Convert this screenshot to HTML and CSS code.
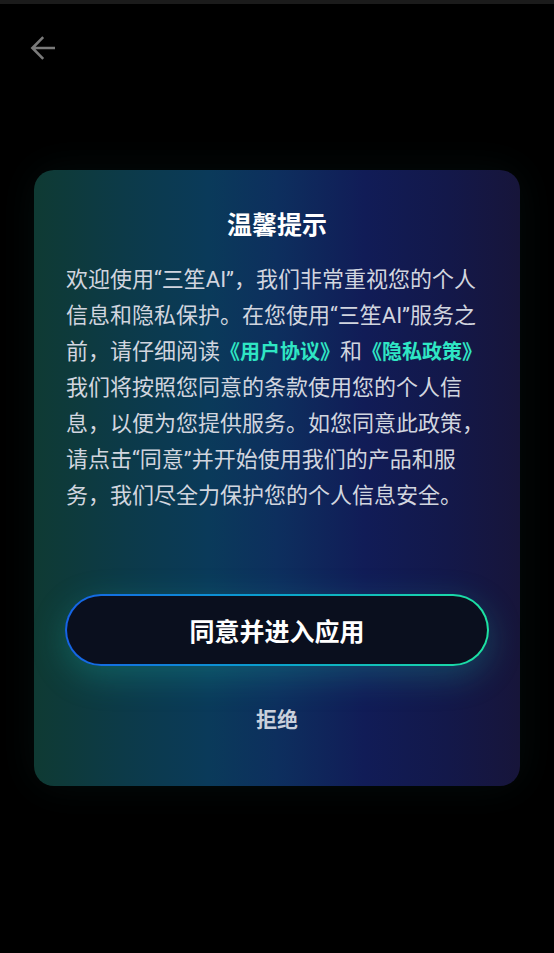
FILE: index.html
```html
<!DOCTYPE html>
<html lang="zh-CN">
<head>
<meta charset="utf-8">
<title>温馨提示</title>
<link rel="stylesheet" href="styles.css">
</head>
<body>
<div class="topbar"></div>
<header class="header">
  <svg class="back" width="26" height="26" viewBox="0 0 26 26" aria-label="返回">
    <path d="M25 13H2.5M13.2 2.2L2.4 13l10.8 10.8" fill="none" stroke="#7a7a7a" stroke-width="2.6"/>
  </svg>
</header>
<main class="card">
  <h1 class="title">温馨提示</h1>
  <p class="text">欢迎使用“三笙AI”，我们非常重视您的个人信息和隐私保护。在您使用“三笙AI”服务之前，请仔细阅读<a class="link">《用户协议》</a>和<a class="link">《隐私政策》</a>我们将按照您同意的条款使用您的个人信息，以便为您提供服务。如您同意此政策，请点击“同意”并开始使用我们的产品和服务，我们尽全力保护您的个人信息安全。</p>
  <button class="agree">同意并进入应用</button>
  <div class="reject">拒绝</div>
</main>
</body>
</html>
```

FILE: styles.css
```css
* { box-sizing: border-box; }
html, body {
  margin: 0;
  padding: 0;
  background: #000;
  height: 100%;
}
body {
  font-family: Roboto, "Noto Sans CJK SC", sans-serif;
  overflow: hidden;
}
.topbar {
  height: 4px;
  background: #1b1b1b;
}
.header {
  height: 166px;
  padding: 31px 0 0 30px;
}
.back { display: block; }
.card {
  margin: 0 34px;
  width: 486px;
  border-radius: 20px;
  padding: 40px 32px 52px;
  background: linear-gradient(90deg, #0f3a33 0%, #0c3a48 18%, #0a3a5a 36%, #0d2f5e 50%, #111c57 68%, #13184a 85%, #17153a 100%);
  box-shadow: 0 0 40px rgba(20, 70, 70, 0.18);
  display: flex;
  flex-direction: column;
  align-items: center;
}
.title {
  margin: 0 0 20px;
  font-size: 25px;
  line-height: 32px;
  font-weight: 700;
  color: #fff;
  text-align: center;
}
.text {
  margin: 0;
  width: 422px;
  font-size: 22px;
  line-height: 36px;
  color: #d1d5df;
}
.link {
  display: inline-block;
  font-size: 20px;
  line-height: 36px;
  font-weight: 700;
  color: #2fe6c4;
}
.agree {
  margin-top: 80px;
  width: 424px;
  height: 72px;
  border-radius: 36px;
  border: 2px solid transparent;
  background: linear-gradient(#0a0f1e, #0a0f1e) padding-box,
              linear-gradient(90deg, #1663e6 0%, #0aa2cc 50%, #1de3a2 100%) border-box;
  box-shadow: 0 10px 34px rgba(30, 190, 160, 0.28);
  color: #fff;
  font-family: Roboto, "Noto Sans CJK SC", sans-serif;
  font-size: 25px;
  font-weight: 700;
  padding: 0;
}
.reject {
  margin-top: 40px;
  font-size: 21px;
  line-height: 28px;
  font-weight: 700;
  color: #c9d0dc;
}
```
